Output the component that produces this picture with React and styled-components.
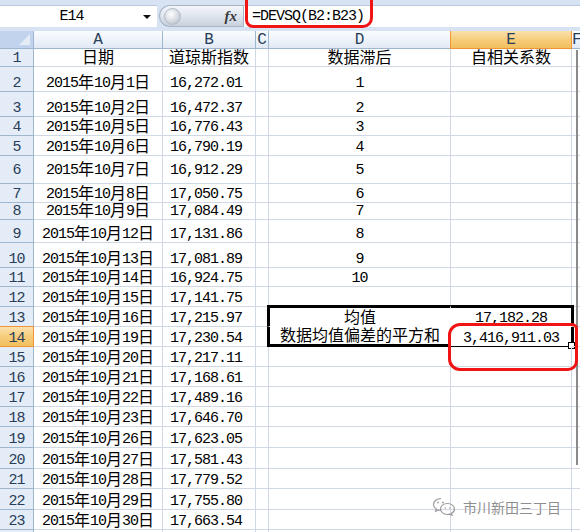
import React from "react";
import styled, { createGlobalStyle, css } from "styled-components";

const GlobalStyle = createGlobalStyle`
  html, body { margin: 0; padding: 0; background: #fff; }
  body { font-family: "Noto Sans CJK SC", sans-serif; }
`;

// row heights of the header row and rows 1..24
const HEIGHTS = [18, 18, 25, 25, 19, 20, 28, 19, 17, 23, 25, 19, 20, 20, 20, 20, 20, 20, 20, 21, 21, 20, 21, 20, 20];
const LETTERS = ["A", "B", "C", "D", "E", "F"];

const rows = [
  { a: "日期", b: "道琼斯指数", d: "数据滞后", e: "自相关系数" },
  { a: "2015年10月1日", b: "16,272.01", d: "1" },
  { a: "2015年10月2日", b: "16,472.37", d: "2" },
  { a: "2015年10月5日", b: "16,776.43", d: "3" },
  { a: "2015年10月6日", b: "16,790.19", d: "4" },
  { a: "2015年10月7日", b: "16,912.29", d: "5" },
  { a: "2015年10月8日", b: "17,050.75", d: "6" },
  { a: "2015年10月9日", b: "17,084.49", d: "7" },
  { a: "2015年10月12日", b: "17,131.86", d: "8" },
  { a: "2015年10月13日", b: "17,081.89", d: "9" },
  { a: "2015年10月14日", b: "16,924.75", d: "10" },
  { a: "2015年10月15日", b: "17,141.75" },
  { a: "2015年10月16日", b: "17,215.97", d: "均值", e: "17,182.28" },
  { a: "2015年10月19日", b: "17,230.54", d: "数据均值偏差的平方和", e: "3,416,911.03" },
  { a: "2015年10月20日", b: "17,217.11" },
  { a: "2015年10月21日", b: "17,168.61" },
  { a: "2015年10月22日", b: "17,489.16" },
  { a: "2015年10月23日", b: "17,646.70" },
  { a: "2015年10月26日", b: "17,623.05" },
  { a: "2015年10月27日", b: "17,581.43" },
  { a: "2015年10月28日", b: "17,779.52" },
  { a: "2015年10月29日", b: "17,755.80" },
  { a: "2015年10月30日", b: "17,663.54" },
  {},
];

const Window = styled.div`
  position: relative;
  width: 580px;
  height: 532px;
  overflow: hidden;
  background: #fff;
`;

/* ---------- formula bar ---------- */

const FormulaBar = styled.div`
  display: flex;
  height: 31px;
  box-sizing: border-box;
  padding: 5px 0 4px;
  background: #d7e3f3;
`;

const NameBox = styled.div`
  width: 157px;
  display: flex;
  align-items: center;
  background: #fff;
  border-top: 1px solid #b9c9de;
  box-sizing: border-box;
  padding-right: 6px;
`;

const NameText = styled.div`
  flex: 1;
  text-align: center;
  font-family: "Liberation Mono", monospace;
  font-size: 15px;
  letter-spacing: -1px;
  color: #000;
`;

const DropArrow = styled.div`
  width: 0;
  height: 0;
  border-left: 4px solid transparent;
  border-right: 4px solid transparent;
  border-top: 4px solid #111;
`;

const FxCapsule = styled.div`
  width: 84px;
  margin-left: 2px;
  display: flex;
  align-items: center;
  justify-content: space-between;
  padding: 0 6px 0 4px;
  box-sizing: border-box;
  border: 1px solid #a6b4c6;
  border-right: none;
  border-radius: 12px 0 0 12px;
  background: linear-gradient(#f4f6fa, #dde3ec 55%, #c9d1dc);
`;

const Knob = styled.div`
  width: 15px;
  height: 15px;
  border-radius: 50%;
  background: radial-gradient(circle at 40% 35%, #ffffff, #d4d9e0 55%, #a9b1bc);
  border: 1px solid #b3bcc8;
`;

const Fx = styled.span`
  font-family: "Liberation Serif", serif;
  font-style: italic;
  font-weight: bold;
  font-size: 15px;
  color: #3a3a3a;
`;

const FormulaInput = styled.div`
  flex: 1;
  display: flex;
  align-items: center;
  padding-left: 8px;
  background: #fff;
  border-left: 1px solid #a6b4c6;
  border-top: 1px solid #b9c9de;
  font-family: "Liberation Mono", monospace;
  font-size: 15px;
  letter-spacing: -1px;
  color: #000;
`;

/* ---------- sheet grid ---------- */

const Sheet = styled.div`
  display: grid;
  grid-template-columns: 34px 129px 93px 13px 182px 121px 1fr;
  grid-template-rows: ${HEIGHTS.map((h) => h + "px").join(" ")};
`;

const Cell = styled.div`
  position: relative;
  box-sizing: border-box;
  display: flex;
  align-items: flex-end;
  justify-content: center;
  padding: 0 ${(p) => p.$padRight || 0}px ${(p) => p.$padBottom || 0}px 0;
  border-right: 1px solid #d0d7e5;
  border-bottom: 1px solid #d0d7e5;
  font-size: 16px;
  line-height: 18px;
  color: #000;
  white-space: nowrap;
`;

const FrameCell = styled(Cell)`
  border-top: ${(p) => (p.$top ? "3px solid #000" : "none")};
  border-left: ${(p) => (p.$left ? "3px solid #000" : "none")};
  border-right: ${(p) => (p.$right ? "3px solid #000" : "1px solid transparent")};
  border-bottom: ${(p) => (p.$bottom ? `${p.$bottom}px solid #000` : "1px solid transparent")};
  margin-top: ${(p) => (p.$top ? "-2px" : 0)};
  margin-left: ${(p) => (p.$left ? "-2px" : 0)};
  margin-right: ${(p) => (p.$right ? "-2px" : 0)};
`;

const FillHandle = styled.div`
  position: absolute;
  right: -4px;
  bottom: -3px;
  width: 5px;
  height: 5px;
  background: #fff;
  border: 1px solid #000;
`;

const Corner = styled(Cell)`
  background: #c2d4ed;
  border-right-color: #9eb6ce;
  border-bottom-color: #9eb6ce;
  &::after {
    content: "";
    position: absolute;
    right: 3px;
    bottom: 3px;
    width: 11px;
    height: 11px;
    background: #e4ecf7;
    clip-path: polygon(100% 0, 100% 100%, 0 100%);
  }
`;

const activeHead = css`
  background: linear-gradient(#fae0ae, #f6cd7c 50%, #f1bf5d);
  border-right-color: #f29536;
  border-bottom-color: #f29536;
`;

const ColHead = styled(Cell)`
  align-items: center;
  background: linear-gradient(#fafcfe, #eef3fa 50%, #e1e9f5);
  border-right-color: #9eb6ce;
  border-bottom-color: #9eb6ce;
  color: #283e5a;
  ${(p) => p.$active && activeHead}
  ${(p) => p.$active && css`box-shadow: -1px 0 0 #f29536;`}
`;

const RowHead = styled(Cell)`
  background: #e4ecf7;
  border-right-color: #9eb6ce;
  border-bottom-color: #9eb6ce;
  color: #283e5a;
  ${(p) => p.$active && activeHead}
  ${(p) => p.$active && css`box-shadow: 0 -1px 0 #f29536;`}
`;

const Latin = styled.span`
  font-family: "Liberation Mono", monospace;
  font-size: 15px;
  line-height: 12px;
  letter-spacing: -1px;
`;

const HeadLetter = styled.span`
  font-family: "Liberation Mono", monospace;
  font-size: 16px;
  line-height: 16px;
`;

/* ---------- overlays ---------- */

const Scribble = styled.div`
  position: absolute;
  left: ${(p) => p.$x}px;
  top: ${(p) => p.$y}px;
  width: ${(p) => p.$w}px;
  height: ${(p) => p.$h}px;
  box-sizing: border-box;
  border: 3px solid #f01414;
  border-radius: ${(p) => p.$radius};
  pointer-events: none;
`;

const PaneEdge = styled.div`
  position: absolute;
  left: 576px;
  top: 50px;
  width: 2px;
  height: 415px;
  background: #8a8a8a;
`;

const Watermark = styled.div`
  position: absolute;
  left: 432px;
  top: 497px;
  display: flex;
  align-items: center;
  gap: 7px;
  color: #8e8e8e;
  font-size: 14px;
  line-height: 18px;
  text-shadow: 0 0 2px #fff, 0 0 2px #fff;
`;

// split a string into runs of ASCII and CJK so each gets its own face
function Txt({ children }) {
  if (!children) return null;
  const runs = String(children).match(/[\x00-\x7f]+|[^\x00-\x7f]+/g) || [];
  return runs.map((run, i) =>
    /^[\x00-\x7f]+$/.test(run) ? <Latin key={i}>{run}</Latin> : <span key={i}>{run}</span>
  );
}

function ChatIcon() {
  return (
    <svg width="24" height="19" viewBox="0 0 24 19" fill="none" stroke="#9a9a9a" strokeWidth="1.2">
      <path d="M9 1.5c-4.2 0-7.5 2.7-7.5 6 0 1.9 1.1 3.5 2.8 4.6l-.7 2.2 2.6-1.3c.9.3 1.8.4 2.8.4" />
      <path d="M15.5 6.5c-3.9 0-7 2.5-7 5.5s3.1 5.5 7 5.5c.8 0 1.6-.1 2.3-.3l2.2 1.1-.6-1.9c1.9-1 3.1-2.6 3.1-4.4 0-3-3.1-5.5-7-5.5z" />
      <circle cx="6" cy="5.5" r=".9" fill="#9a9a9a" stroke="none" />
      <circle cx="11" cy="5.5" r=".9" fill="#9a9a9a" stroke="none" />
      <circle cx="13.2" cy="11" r=".8" fill="#9a9a9a" stroke="none" />
      <circle cx="17.8" cy="11" r=".8" fill="#9a9a9a" stroke="none" />
    </svg>
  );
}

function DataRow({ row, n }) {
  const pad = n === 6 ? 6 : 1;
  const framed = n === 13 || n === 14;
  return (
    <>
      <RowHead $active={n === 14} $padBottom={pad}>
        <Latin>{n}</Latin>
      </RowHead>
      <Cell $padBottom={pad}>
        <Txt>{row.a}</Txt>
      </Cell>
      <Cell $padBottom={pad} $padRight={n === 1 ? 0 : 6}>
        <Txt>{row.b}</Txt>
      </Cell>
      <Cell />
      {framed ? (
        <>
          <FrameCell $left $top={n === 13} $bottom={n === 14 ? 3 : 0} $padBottom={pad}>
            <Txt>{row.d}</Txt>
          </FrameCell>
          <FrameCell $right $top={n === 13} $bottom={n === 14 ? 1 : 0} $padBottom={pad}>
            <Txt>{row.e}</Txt>
            {n === 14 && <FillHandle />}
          </FrameCell>
        </>
      ) : (
        <>
          <Cell $padBottom={pad}>
            <Txt>{row.d}</Txt>
          </Cell>
          <Cell $padBottom={pad}>
            <Txt>{row.e}</Txt>
          </Cell>
        </>
      )}
      <Cell />
    </>
  );
}

export default function App() {
  return (
    <Window>
      <GlobalStyle />
      <FormulaBar>
        <NameBox>
          <NameText>E14</NameText>
          <DropArrow />
        </NameBox>
        <FxCapsule>
          <Knob />
          <Fx>fx</Fx>
        </FxCapsule>
        <FormulaInput>=DEVSQ(B2:B23)</FormulaInput>
      </FormulaBar>

      <Sheet>
        <Corner />
        {LETTERS.map((l) => (
          <ColHead key={l} $active={l === "E"}>
            <HeadLetter>{l}</HeadLetter>
          </ColHead>
        ))}
        {rows.map((row, i) => (
          <DataRow key={i} row={row} n={i + 1} />
        ))}
      </Sheet>

      <PaneEdge />
      <Scribble $x={245} $y={-12} $w={128} $h={40} $radius="6px 8px 10px 8px" />
      <Scribble $x={448} $y={323} $w={130} $h={48} $radius="12px 6px 10px 12px" />

      <Watermark>
        <ChatIcon />
        <span>市川新田三丁目</span>
      </Watermark>
    </Window>
  );
}
